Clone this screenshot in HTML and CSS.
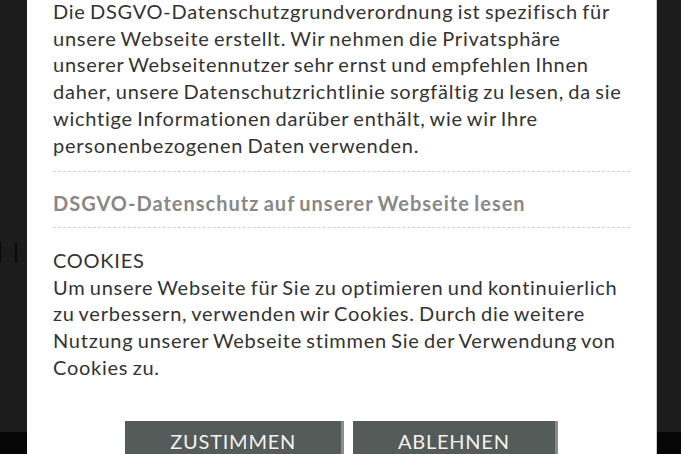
FILE: index.html
```html
<!DOCTYPE html>
<html lang="de">
<head>
<meta charset="utf-8">
<link rel="stylesheet" href="styles.css">
</head>
<body>
<div class="page">
  <div class="gutter gutter-left"><span class="bg-text">d I</span></div>
  <div class="modal">
    <p class="text intro">Die DSGVO-Datenschutzgrundverordnung ist spezifisch für unsere Webseite erstellt. Wir nehmen die Privatsphäre unserer Webseitennutzer sehr ernst und empfehlen Ihnen daher, unsere Datenschutzrichtlinie sorgfältig zu lesen, da sie wichtige Informationen darüber enthält, wie wir Ihre personenbezogenen Daten verwenden.</p>
    <div class="link-row"><a class="policy-link">DSGVO-Datenschutz auf unserer Webseite lesen</a></div>
    <h3 class="title">COOKIES</h3>
    <p class="text">Um unsere Webseite für Sie zu optimieren und kontinuierlich zu verbessern, verwenden wir Cookies. Durch die weitere Nutzung unserer Webseite stimmen Sie der Verwendung von Cookies zu.</p>
    <div class="actions">
      <button class="btn">ZUSTIMMEN</button>
      <button class="btn">ABLEHNEN</button>
    </div>
  </div>
  <div class="gutter gutter-right"></div>
</div>
</body>
</html>
```

FILE: styles.css
```css
html, body {
  margin: 0;
  padding: 0;
  height: 454px;
  overflow: hidden;
}
body {
  background: linear-gradient(to bottom, #1c1c1c 0, #1c1c1c 432px, #060606 432px);
  font-family: Lato, "Noto Sans", sans-serif;
}
.page {
  display: flex;
  height: 454px;
}
.gutter {
  flex: 1;
  overflow: hidden;
}
.gutter-left {
  width: 27px;
  flex: 0 0 27px;
  display: flex;
  justify-content: flex-end;
  padding-top: 236px;
  box-sizing: border-box;
}
.bg-text {
  font-family: "Liberation Sans", sans-serif;
  font-size: 30px;
  line-height: 34px;
  color: #0c0c0c;
  white-space: nowrap;
  padding-right: 7px;
}
.modal {
  flex: 0 0 630px;
  box-sizing: border-box;
  background: #fff;
  border-right: 1px solid #c8c8c8;
  padding: 0 26px;
}
.text,
.policy-link,
.title,
.btn {
  font-family: Lato, "Noto Sans", sans-serif;
  font-size: 20px;
  line-height: 26.7px;
  letter-spacing: 0.75px;
  word-spacing: -1.5px;
}
.text {
  margin: 0;
  color: #333;
}
.intro {
  margin-top: -2px;
}
.link-row {
  margin-top: 13px;
  border-top: 1px dashed #cfcfcf;
  border-bottom: 1px dashed #cfcfcf;
  padding: 18px 0 10px;
}
.policy-link {
  display: block;
  font-weight: 700;
  color: #888;
  letter-spacing: 1px;
}
.title {
  margin: 19px 0 0;
  font-weight: 400;
  color: #333;
}
.actions {
  display: flex;
  justify-content: center;
  gap: 9px;
  margin-top: 41px;
}
.btn {
  color: #f2f2f2;
  background: #545b59;
  border: 0;
  border-right: 3px solid #8b8b8b;
  padding: 7px 45px 10px;
  margin: 0;
}
```
